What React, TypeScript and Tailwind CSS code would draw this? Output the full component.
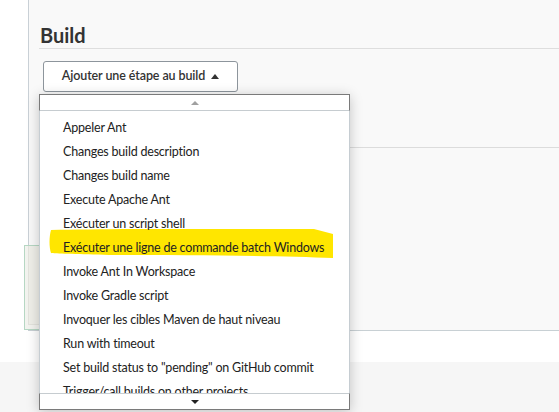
const items = [
  'Appeler Ant',
  'Changes build description',
  'Changes build name',
  'Execute Apache Ant',
  'Exécuter un script shell',
  'Exécuter une ligne de commande batch Windows',
  'Invoke Ant In Workspace',
  'Invoke Gradle script',
  'Invoquer les cibles Maven de haut niveau',
  'Run with timeout',
  'Set build status to "pending" on GitHub commit',
  'Trigger/call builds on other projects',
]

function Highlight() {
  // yellow marker stroke drawn over the screenshot
  return (
    <svg
      className="absolute left-[9px] top-[118px] pointer-events-none"
      width="286"
      height="30"
      viewBox="0 0 286 30"
    >
      <path
        d="M2 1 C60 0 180 -1 265 0 L284 5 L284 29 C230 27 150 26 60 26 C30 25 10 25 2 24 C0 18 0 8 2 1 Z"
        fill="#ffe600"
      />
    </svg>
  )
}

export default function App() {
  return (
    <div
      className="relative w-[559px] h-[412px] overflow-hidden bg-white flex flex-col text-[#333]"
      style={{ fontFamily: 'Lato, "Noto Sans", sans-serif' }}
    >
      <div className="flex h-[331px] shrink-0">
        <div className="w-[28px] shrink-0 bg-white" />
        <div className="relative flex-1 flex flex-col bg-[#f9f9f9] border-l border-[#c9d0d6] border-b border-b-[#c8d0d4] pl-[10px]">
          <h2 className="mt-[22px] h-[28px] border-b border-[#dedede] text-[20px] leading-[26px] font-bold text-[#333] pl-[1px]">
            Build
          </h2>
          <div className="relative ml-[4px] mt-[12px] w-[195px]">
            <button className="w-[195px] h-[31px] flex items-center justify-center gap-[6px] bg-white border-[1.5px] border-[#8d959c] rounded-[3px] text-[12.5px] font-semibold text-[#333] tracking-[-0.1px]">
              <span>Ajouter une étape au build</span>
              <svg width="8" height="5" viewBox="0 0 8 5">
                <path d="M0 5 L4 0 L8 5 Z" fill="#333" />
              </svg>
            </button>
          </div>
          <div className="mt-[55px] border-b border-[#dcdcdc]" />
          <div className="mt-[97px] -ml-[15px] w-[200px] h-[87px] border border-[#b6d7c3] bg-[#f3f3ef] flex">
            <div className="ml-[3px] mb-[4px] flex-1 border-l border-b border-[#e3e3dd] bg-[#efefe9]" />
          </div>
        </div>
      </div>
      <div className="h-[31px] shrink-0 bg-white" />
      <div className="flex-1 bg-[#f6f6f6]" />

      {/* dropdown menu */}
      <div className="absolute left-[39px] top-[94px] w-[311px] h-[316px] flex flex-col bg-white shadow-[0_2px_12px_rgba(0,0,0,0.22)]">
        <div className="h-[17px] shrink-0 flex items-center justify-center border border-[#7a7a7a] border-b-[#c6ccd0]">
          <svg width="8" height="4" viewBox="0 0 8 4">
            <path d="M0 4 L4 0 L8 4 Z" fill="#a0a0a0" />
          </svg>
        </div>
        <div className="relative flex-1 overflow-hidden border-x border-[#c6cdd2]">
          <Highlight />
          <ul className="relative pt-[5px] text-[12.5px] tracking-[-0.2px] text-[#222]">
            {items.map((item) => (
              <li key={item} className="h-[24px] flex items-center pl-[23px] whitespace-nowrap">
                {item}
              </li>
            ))}
          </ul>
        </div>
        <div className="h-[17px] shrink-0 flex items-center justify-center border border-[#7a7a7a] border-t-[#c6ccd0]">
          <svg width="8" height="4" viewBox="0 0 8 4">
            <path d="M0 0 L8 0 L4 4 Z" fill="#222" />
          </svg>
        </div>
      </div>
    </div>
  )
}
